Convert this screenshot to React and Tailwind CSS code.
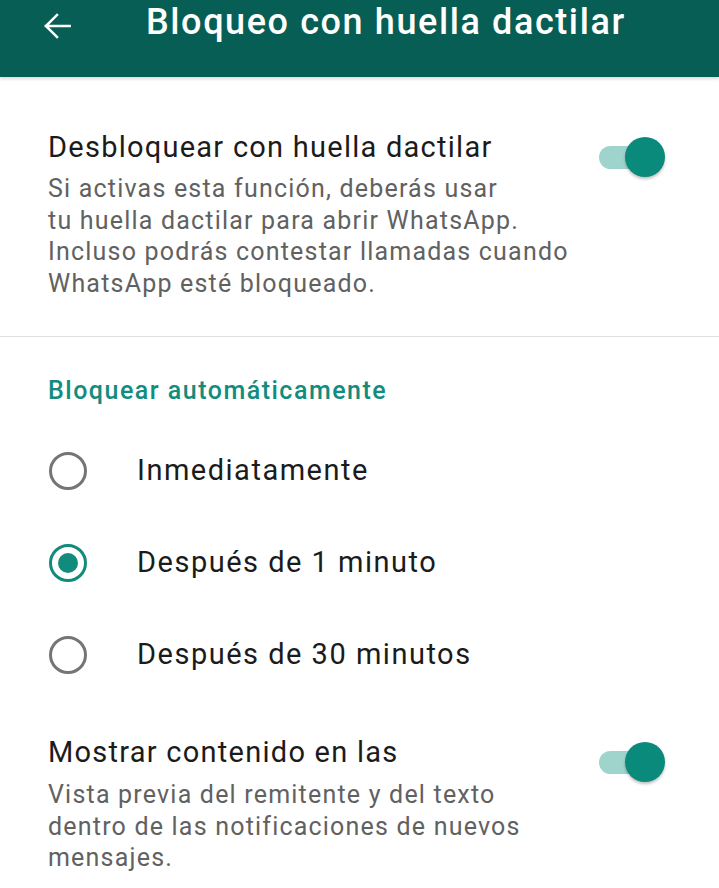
import React from 'react'

const FONT = { fontFamily: 'Roboto, "Noto Sans", sans-serif' }

function Toggle() {
  return (
    <div className="relative w-[66px] h-[40px] shrink-0">
      <div className="absolute left-0 top-[9px] w-[56px] h-[23px] rounded-full bg-[#9fd4cd]" />
      <div className="absolute right-0 top-0 w-[40px] h-[40px] rounded-full bg-[#0a8a7a] shadow-[0_2px_3px_rgba(0,0,0,0.25)]" />
    </div>
  )
}

function Radio({ checked }) {
  return (
    <div
      className={`w-[38px] h-[38px] rounded-full border-[3.5px] flex items-center justify-center shrink-0 ${
        checked ? 'border-[#138b7c]' : 'border-[#757575]'
      }`}
    >
      {checked && <div className="w-[20px] h-[20px] rounded-full bg-[#138b7c]" />}
    </div>
  )
}

const OPTIONS = [
  { label: 'Inmediatamente', checked: false },
  { label: 'Después de 1 minuto', checked: true },
  { label: 'Después de 30 minutos', checked: false },
]

export default function App() {
  return (
    <div className="w-[719px] h-[888px] bg-white overflow-hidden" style={FONT}>
      {/* App bar */}
      <div className="h-[77px] bg-[#075e54] flex items-start shadow-[0_2px_3px_rgba(0,0,0,0.15)]">
        <svg className="ml-[38px] mt-[7px]" width="38" height="38" viewBox="0 0 24 24" fill="none" stroke="white" strokeWidth="1.6" strokeLinecap="square">
          <path d="M20 12H5M12 5l-7 7 7 7" />
        </svg>
        <h1 className="ml-[70px] mt-[-2px] text-white text-[36px] leading-[48px] font-medium tracking-[1.6px]">
          Bloqueo con huella dactilar
        </h1>
      </div>

      {/* Fingerprint unlock */}
      <div className="flex items-start pl-[48px] pr-[54px] pt-[52px] pb-[36px] border-b border-[#e0e0e0]">
        <div className="flex-1">
          <div className="text-[29px] leading-[36px] tracking-[1.25px] text-[#1b1b1b]">Desbloquear con huella dactilar</div>
          <div className="mt-[8px] text-[25px] leading-[31.7px] tracking-[1.2px] text-[#616161] whitespace-nowrap">
            Si activas esta función, deberás usar
            <br />
            tu huella dactilar para abrir WhatsApp.
            <br />
            Incluso podrás contestar llamadas cuando
            <br />
            WhatsApp esté bloqueado.
          </div>
        </div>
        <div className="mt-[8px]">
          <Toggle />
        </div>
      </div>

      {/* Auto lock */}
      <div className="pl-[48px] pt-[38px] text-[25px] leading-[32px] font-medium tracking-[1.5px] text-[#128c7e]">
        Bloquear automáticamente
      </div>
      <div className="mt-[18px] flex flex-col">
        {OPTIONS.map(o => (
          <div key={o.label} className="h-[92px] flex items-center pl-[49px]">
            <Radio checked={o.checked} />
            <span className="ml-[50px] text-[29px] tracking-[1.5px] text-[#1b1b1b]">{o.label}</span>
          </div>
        ))}
      </div>

      {/* Notification content */}
      <div className="flex items-start pl-[48px] pr-[54px] pt-[33px]">
        <div className="flex-1">
          <div className="text-[29px] leading-[36px] tracking-[1.25px] text-[#1b1b1b]">Mostrar contenido en las</div>
          <div className="mt-[9px] text-[25px] leading-[31.7px] tracking-[1.2px] text-[#616161] whitespace-nowrap">
            Vista previa del remitente y del texto
            <br />
            dentro de las notificaciones de nuevos
            <br />
            mensajes.
          </div>
        </div>
        <div className="mt-[8px]">
          <Toggle />
        </div>
      </div>
    </div>
  )
}
